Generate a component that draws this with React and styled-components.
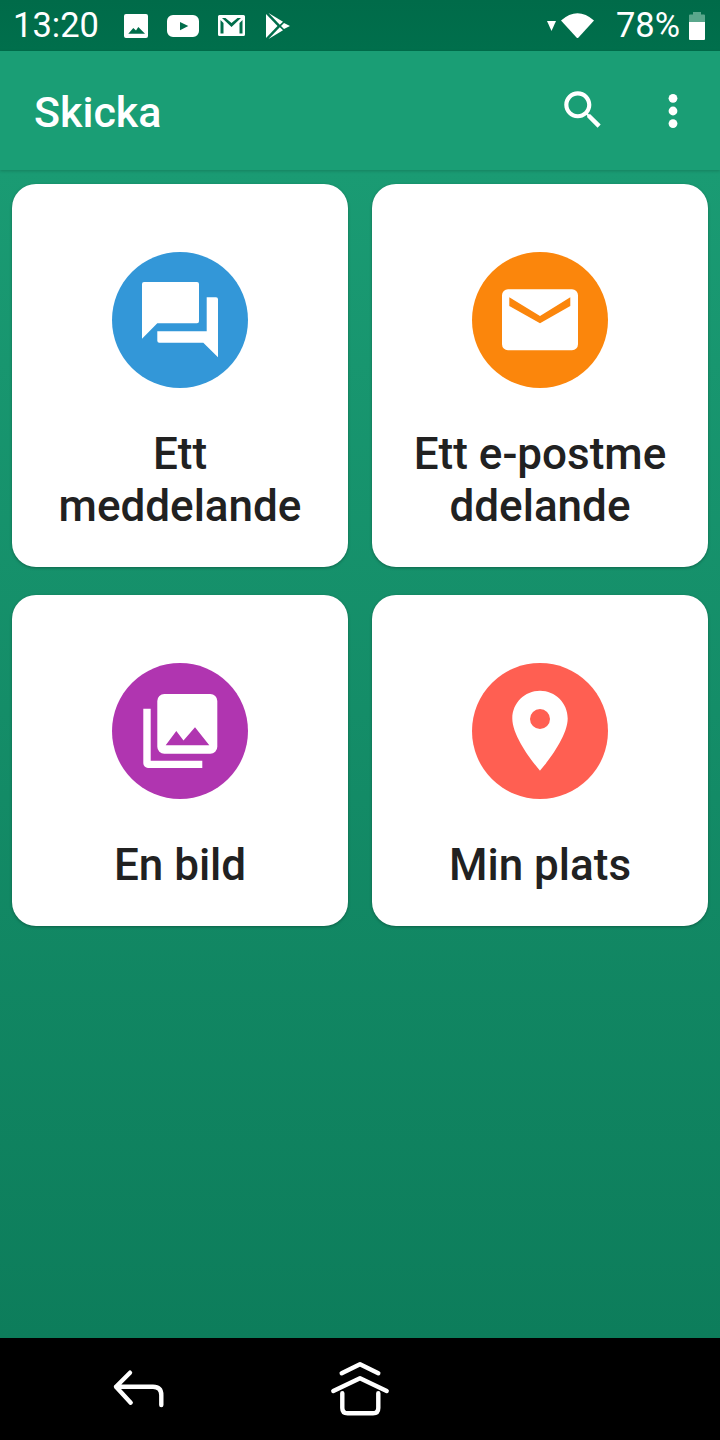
import React from 'react';
import styled, { createGlobalStyle } from 'styled-components';

const GlobalStyle = createGlobalStyle`
  * {
    box-sizing: border-box;
  }

  body {
    margin: 0;
    font-family: Roboto, "Noto Sans", sans-serif;
    background: #000;
  }
`;

const Screen = styled.div`
  display: flex;
  flex-direction: column;
  min-height: 100vh;
`;

const StatusBar = styled.div`
  display: flex;
  align-items: center;
  flex: 0 0 51px;
  padding: 0 15px 0 13px;
  background: linear-gradient(#006b49, #006f4c);
  color: #fff;
  font-size: 34.5px;
  line-height: 51px;
`;

const StatusIcons = styled.div`
  display: flex;
  align-items: center;
  gap: ${(p) => p.$gap}px;
  margin-left: ${(p) => p.$left || 0}px;
`;

const Spacer = styled.div`
  flex: 1;
`;

const AppBar = styled.header`
  display: flex;
  align-items: center;
  flex: 0 0 119px;
  padding: 0 23px 0 34px;
  background: #1a9e75;
  box-shadow: 0 1px 3px rgba(0, 0, 0, 0.18);
  position: relative;
  color: #fff;
`;

const Title = styled.h1`
  flex: 1;
  margin: 3px 0 0;
  font-size: 43px;
  font-weight: 500;
`;

const Actions = styled.div`
  display: flex;
  align-items: center;
  gap: 41px;
`;

const Content = styled.main`
  flex: 1;
  display: grid;
  grid-template-columns: 336px 336px;
  align-content: start;
  gap: 28px 24px;
  padding: 14px 12px;
  background: linear-gradient(#1a9b73, #0d7d5b);
`;

const Card = styled.div`
  display: flex;
  flex-direction: column;
  align-items: center;
  padding: 68px 0 35px;
  border-radius: 24px;
  background: #fff;
  box-shadow: 0 1px 3px rgba(0, 0, 0, 0.3);
`;

const Circle = styled.div`
  width: 136px;
  height: 136px;
  border-radius: 50%;
  background: ${(p) => p.$color};
`;

const CardLabel = styled.div`
  margin-top: 40px;
  color: #212121;
  font-size: 44px;
  font-weight: 500;
  line-height: 52px;
  text-align: center;
  white-space: pre-line;
`;

const NavBar = styled.nav`
  display: flex;
  align-items: center;
  flex: 0 0 102px;
  gap: 160px;
  padding-left: 110px;
  background: #000;
`;

const Glyph = styled.svg`
  display: block;
  flex: none;
  fill: #fff;
`;

const PlayGlyph = styled(Glyph)`
  margin-left: 2px;
`;

const NavGlyph = styled.svg`
  display: block;
  width: 60px;
  height: 60px;
  fill: none;
  stroke: #fff;
  stroke-width: 4.4;
  stroke-linecap: round;
  stroke-linejoin: round;
`;

const ChatIcon = () => (
  <Glyph width="136" height="136" viewBox="0 0 136 136">
    <path d="M32 30H85a2 2 0 0 1 2 2V69.3a2 2 0 0 1-2 2H45.3L30 86.7V32a2 2 0 0 1 2-2z" />
    <path d="M94.7 45.3H104a2 2 0 0 1 2 2V105.3L91.3 90.7H47.3a2 2 0 0 1-2-2V79.3H94.7z" />
  </Glyph>
);

const MailIcon = () => (
  <Glyph width="136" height="136" viewBox="0 0 136 136">
    <path
      fillRule="evenodd"
      d="M36 37.3H100a6 6 0 0 1 6 6V92.3a6 6 0 0 1-6 6H36a6 6 0 0 1-6-6V43.3a6 6 0 0 1 6-6zM37.3 45.3V54L68 71.3 98.3 54V45.3L68 64z"
    />
  </Glyph>
);

const PhotosIcon = () => (
  <Glyph width="136" height="136" viewBox="0 0 136 136">
    <path
      fillRule="evenodd"
      d="M52.3 31H98.3a7 7 0 0 1 7 7V83.7a7 7 0 0 1-7 7H52.3a7 7 0 0 1-7-7V38a7 7 0 0 1 7-7zM53.7 82.3H97.3L83 64.3 71.5 77.5 64.3 68z"
    />
    <path d="M31.3 45.7H38.7V97.7H90.3V105H36a4.7 4.7 0 0 1-4.7-4.7z" />
  </Glyph>
);

const PinIcon = () => (
  <Glyph width="136" height="136" viewBox="0 0 136 136">
    <path
      fillRule="evenodd"
      d="M68 27.7C52.7 27.7 40.3 40 40.3 55.4 40.3 76 68 107.7 68 107.7S95.7 76 95.7 55.4C95.7 40 83.3 27.7 68 27.7zM68 46a10 10 0 1 1 0 20 10 10 0 0 1 0-20z"
    />
  </Glyph>
);

const items = [
  { label: 'Ett\nmeddelande', color: '#3397d8', Icon: ChatIcon },
  { label: 'Ett e-postme\nddelande', color: '#fb860c', Icon: MailIcon },
  { label: 'En bild', color: '#b035b0', Icon: PhotosIcon },
  { label: 'Min plats', color: '#ff5f52', Icon: PinIcon },
];

const App = () => {
  return (
    <Screen>
      <GlobalStyle />
      <StatusBar>
        <span>13:20</span>
        <StatusIcons $gap={19} $left={25}>
          <Glyph width="24" height="24" viewBox="0 0 24 24">
            <path
              fillRule="evenodd"
              d="M2 0H22a2 2 0 0 1 2 2V22a2 2 0 0 1-2 2H2a2 2 0 0 1-2-2V2a2 2 0 0 1 2-2zM4.3 19.7H21L14.3 13 12 16.5 9.3 14z"
            />
          </Glyph>
          <Glyph width="32" height="22" viewBox="0 0 32 22">
            <path
              fillRule="evenodd"
              d="M6 0H26a6 6 0 0 1 6 6V16a6 6 0 0 1-6 6H6a6 6 0 0 1-6-6V6a6 6 0 0 1 6-6zM13 7V15.3L21.3 11z"
            />
          </Glyph>
          <Glyph width="27" height="21" viewBox="0 0 27 21">
            <path
              fillRule="evenodd"
              d="M1.5 0H25.5A1.5 1.5 0 0 1 27 1.5V19.5A1.5 1.5 0 0 1 25.5 21H1.5A1.5 1.5 0 0 1 0 19.5V1.5A1.5 1.5 0 0 1 1.5 0zM2.5 5V18.5H5.5V8zM24.5 5 21.5 8V18.5H24.5zM7.5 3 13.5 8 19.5 3H23L13.5 12 4 3z"
            />
          </Glyph>
          <PlayGlyph width="24" height="26" viewBox="0 0 24 26">
            <path d="M0 1 11.5 13 0 25z" />
            <path d="M2.5 0 17 8.8 13.8 11.8z" />
            <path d="M2.5 26 17 17.2 13.8 14.2z" />
            <path d="M18 10 24 13 18 16 15 13z" />
          </PlayGlyph>
        </StatusIcons>
        <Spacer />
        <StatusIcons $gap={5}>
          <Glyph width="9" height="10" viewBox="0 0 9 10">
            <path d="M0 0H9L4.5 10z" />
          </Glyph>
          <Glyph width="33" height="25" viewBox="0 0 33 25">
            <path d="M0 7.5Q16.5-7 33 7.5L17.5 24.4Q16.5 25.4 15.5 24.4z" />
          </Glyph>
        </StatusIcons>
        <StatusIcons $gap={9} $left={22}>
          <span>78%</span>
          <Glyph width="16" height="28" viewBox="0 0 16 28">
            <path fill="#5aa78c" d="M4 0H12V2.5H15a1 1 0 0 1 1 1V10H0V3.5a1 1 0 0 1 1-1H4z" />
            <path d="M0 10H16V27a1 1 0 0 1-1 1H1a1 1 0 0 1-1-1z" />
          </Glyph>
        </StatusIcons>
      </StatusBar>

      <AppBar>
        <Title>Skicka</Title>
        <Actions>
          <Glyph width="50" height="50" viewBox="0 0.5 24 24">
            <path d="M15.5 14h-.79l-.28-.27C15.41 12.59 16 11.11 16 9.5 16 5.91 13.09 3 9.5 3S3 5.91 3 9.5 5.91 16 9.5 16c1.61 0 3.09-.59 4.23-1.57l.27.28v.79l5 4.99L20.49 19l-4.99-5zm-6 0C7.01 14 5 11.99 5 9.5S7.01 5 9.5 5 14 7.01 14 9.5 11.99 14 9.5 14z" />
          </Glyph>
          <Glyph width="48" height="48" viewBox="0 0 48 48">
            <circle cx="24" cy="11.3" r="4.4" />
            <circle cx="24" cy="24" r="4.4" />
            <circle cx="24" cy="36.6" r="4.4" />
          </Glyph>
        </Actions>
      </AppBar>

      <Content>
        {items.map(({ label, color, Icon }) => (
          <Card key={label}>
            <Circle $color={color}>
              <Icon />
            </Circle>
            <CardLabel>{label}</CardLabel>
          </Card>
        ))}
      </Content>

      <NavBar>
        <NavGlyph viewBox="0 0 60 60">
          <path d="M20 13.7 6 27.7 20.7 43.7M6 27.7H43Q51.3 27.7 51.3 36V46" />
        </NavGlyph>
        <NavGlyph viewBox="0 0 60 60">
          <path d="M11.7 14.3 30 5.3 48.3 14.3M3.3 32 30 19.3 56.7 32M12.3 34.3V49Q12.3 54.3 17.6 54.3H43Q48.3 54.3 48.3 49V34.3" />
        </NavGlyph>
      </NavBar>
    </Screen>
  );
};

export default App;
